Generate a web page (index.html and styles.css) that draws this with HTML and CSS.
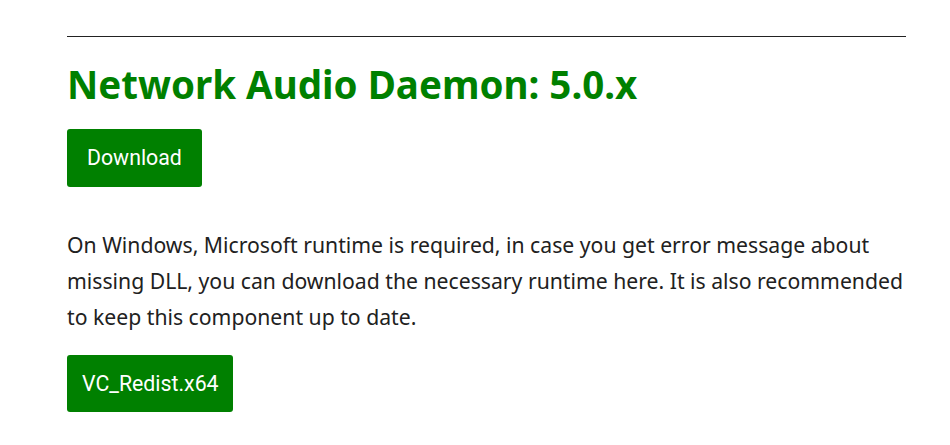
FILE: index.html
```html
<!DOCTYPE html>
<html lang="en">
<head>
    <meta charset="UTF-8">
    <meta name="viewport" content="width=device-width, initial-scale=1.0">
    <title>Network Audio Daemon</title>
    <link rel="stylesheet" href="styles.css">
</head>
<body>
    <div class="container">
        <hr class="divider">
        <h1 class="title">Network Audio Daemon: 5.0.x</h1>
        <a href="#" class="button">Download</a>
        <p class="note">On Windows, Microsoft runtime is required, in case you get error message about missing DLL, you can download the necessary runtime here. It is also recommended to keep this component up to date.</p>
        <a href="#" class="button button-tight">VC_Redist.x64</a>
    </div>
</body>
</html>
```

FILE: styles.css
```css
body {
    margin: 0;
    background-color: #fff;
    font-family: "Noto Sans", "Open Sans", sans-serif;
    color: #212121;
}
.container {
    width: 839px;
    padding: 36px 0 0 67px;
}
.divider {
    margin: 0;
    border: none;
    border-top: 1px solid #222;
}
.title {
    margin: 22px 0 20px;
    font-size: 38.5px;
    line-height: 50px;
    font-weight: bold;
    color: #008000;
}
.button {
    display: inline-block;
    padding: 0 20px;
    height: 58px;
    line-height: 58px;
    font-family: Roboto, sans-serif;
    font-size: 21.3px;
    color: #fff;
    background: #008000;
    border-radius: 3px;
    text-decoration: none;
}
.button-tight {
    padding: 0 14px 0 15px;
    height: 57px;
    line-height: 57px;
}
.note {
    margin: 40px -14px 20px 0;
    font-size: 21.2px;
    line-height: 36px;
}
```
